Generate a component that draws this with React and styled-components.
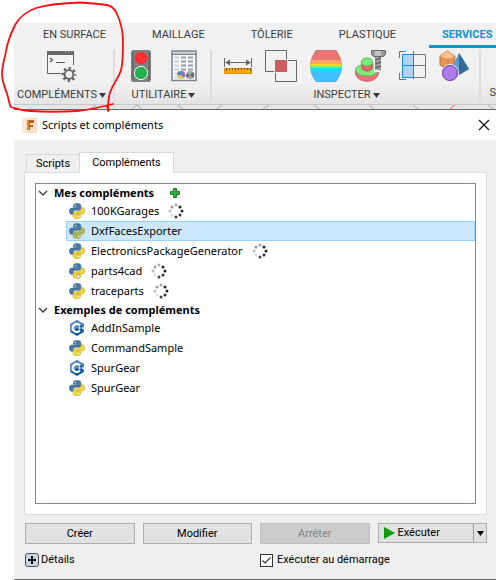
import React, { useState } from "react";
import styled, { createGlobalStyle, css } from "styled-components";

const GlobalStyle = createGlobalStyle`
  *, *::before, *::after { box-sizing: border-box; }
  body {
    margin: 0;
    background: #fff;
    font-family: "Noto Sans", "Open Sans", sans-serif;
    font-size: 11px;
    line-height: 16px;
    color: #000;
  }
  button { font: inherit; color: inherit; cursor: pointer; }
  svg { display: block; flex: none; }
`;

const widgetFont = css`
  font-family: Roboto, "Open Sans", sans-serif;
  font-size: 11px;
  line-height: 16px;
`;

const Screen = styled.main`
  position: relative;
  padding: 23px 0 0 14px;
  overflow: hidden;
`;

const Ribbon = styled.header`
  background: #f1f1f1;
  font-family: Roboto, sans-serif;
  font-size: 11px;
  color: #3c3c3c;
  overflow: hidden;
`;

const RibbonTabs = styled.nav`
  display: flex;
  gap: 20px;
  height: 25px;
  padding-left: 16px;
`;

const RibbonTab = styled.button`
  flex: none;
  height: 25px;
  padding: 1px 13px 0;
  border: 0;
  border-bottom: 3px solid ${(p) => (p.$active ? "#0696d7" : "transparent")};
  background: none;
  font-size: 11px;
  font-weight: ${(p) => (p.$active ? 700 : 400)};
  color: ${(p) => (p.$active ? "#0696d7" : "#3c3c3c")};
`;

const ToolGroups = styled.div`
  display: flex;
  height: 56px;
  padding-top: 2px;
  background: linear-gradient(#f1f1f1 60%, #e4e4e4);
`;

const ToolGroup = styled.section`
  display: flex;
  flex: none;
  flex-direction: column;
  align-items: center;
  gap: 5px;
  width: ${(p) => p.$width}px;
  height: 51px;
  padding-left: 2px;
  border-right: 2px solid #dcdcdc;
  &:first-child {
    padding: 0 4px 0 0;
  }
  &:last-child {
    flex: 1;
    align-items: flex-end;
    border-right: 0;
  }
`;

const ToolIcons = styled.div`
  display: flex;
  align-items: center;
  gap: ${(p) => p.$gap}px;
  height: 32px;
`;

const ToolButton = styled.button`
  padding: 0;
  border: 0;
  background: none;
`;

const GroupLabel = styled.button`
  display: flex;
  align-items: center;
  gap: 2px;
  padding: 0;
  border: 0;
  background: none;
  line-height: 16px;
  white-space: nowrap;
`;

const CanvasStrip = styled.div`
  height: 6px;
  border-top: 1px solid #c8c8c8;
  border-bottom: 1px solid #666;
  background: #e6e6e6;
  overflow: hidden;
`;

const Dialog = styled.section`
  background: #efefef;
  border-bottom: 1px solid #6a6668;
`;

const TitleBar = styled.div`
  display: flex;
  align-items: center;
  gap: 5px;
  height: 30px;
  padding: 0 6px 0 8px;
  background: #fff;
`;

const Title = styled.h1`
  flex: 1;
  margin: 0;
  font-size: 11px;
  font-weight: 400;
`;

const CloseButton = styled.button`
  padding: 0;
  border: 0;
  background: none;
`;

const DialogBody = styled.div`
  padding: 11px 9px 11px 10px;
`;

const TabList = styled.div`
  display: flex;
  align-items: flex-end;
  height: 21px;
  padding-left: 2px;
`;

const DialogTab = styled.button`
  position: relative;
  height: 18px;
  padding: 0 9px;
  border: 1px solid #d9d9d9;
  border-right-width: 0;
  border-bottom: 0;
  background: #f0f0f0;
  ${widgetFont}
  ${(p) =>
    p.$active &&
    css`
      height: 21px;
      margin-bottom: -1px;
      padding: 0 12px;
      border-right-width: 1px;
      background: #fff;
    `}
`;

const Panel = styled.div`
  padding: 10px;
  border: 1px solid #dcdcdc;
  background: #fff;
`;

const Tree = styled.div`
  height: 321px;
  border: 1px solid #828790;
  background: #fff;
`;

const BranchHeader = styled.div`
  display: flex;
  align-items: center;
  height: 17px;
  padding-left: 2px;
  font-weight: 700;
`;

const BranchToggle = styled.button`
  display: flex;
  align-items: center;
  gap: 6px;
  padding: 0;
  border: 0;
  background: none;
  line-height: 16px;
`;

const AddButton = styled.button`
  margin-left: 16px;
  padding: 0;
  border: 0;
  background: none;
`;

const Leaves = styled.ul`
  margin: 0;
  padding: 0 0 0 30px;
  list-style: none;
`;

const Leaf = styled.button`
  display: flex;
  align-items: center;
  width: 100%;
  height: 20px;
  padding: 0 2px;
  border: 1px solid ${(p) => (p.$selected ? "#99d1ff" : "transparent")};
  background: ${(p) => (p.$selected ? "#cce8ff" : "none")};
  gap: 6px;
  line-height: 16px;
  text-align: left;
`;

const LeafName = styled.span`
  margin-right: 3px;
`;

const Actions = styled.div`
  display: grid;
  grid-template-columns: repeat(4, 1fr);
  gap: 8px;
  margin: 8px 0 0 1px;
`;

const ActionButton = styled.button`
  height: 21px;
  padding: 0;
  border: 1px solid #adadad;
  background: #e1e1e1;
  ${widgetFont}
  &:disabled {
    border-color: #bfbfbf;
    background: #ccc;
    color: #838383;
  }
`;

const SplitButton = styled.div`
  display: flex;
  height: 20px;
  border: 1px solid #adadad;
  background: #e1e1e1;
`;

const RunButton = styled.button`
  display: flex;
  flex: 1;
  align-items: center;
  gap: 3px;
  padding: 0 0 0 4px;
  border: 0;
  background: none;
  ${widgetFont}
`;

const RunMenuButton = styled.button`
  display: grid;
  place-items: center;
  width: 13px;
  padding: 0;
  border: 0;
  border-left: 1px solid #a0a0a0;
  background: none;
`;

const Footer = styled.div`
  display: grid;
  grid-template-columns: repeat(4, 1fr);
  gap: 8px;
  align-items: center;
  margin: 8px 0 0 1px;
`;

const DetailsButton = styled.button`
  display: flex;
  align-items: center;
  grid-column: span 2;
  justify-self: start;
  gap: 2px;
  padding: 0;
  border: 0;
  background: none;
  ${widgetFont}
`;

const StartupLabel = styled.label`
  display: flex;
  grid-column: span 2;
  align-items: center;
  gap: 4px;
  ${widgetFont}
`;

const CheckBox = styled.input`
  appearance: none;
  width: 13px;
  height: 13px;
  margin: 0;
  border: 1px solid #333;
  background: #fff;
  &:checked {
    background: #fff
      url("data:image/svg+xml,%3Csvg xmlns='http://www.w3.org/2000/svg' viewBox='0 0 11 11'%3E%3Cpath d='M1.5 5.5 4 8 9.5 2.5' fill='none' stroke='%23333' stroke-width='1.2'/%3E%3C/svg%3E")
      center / 11px 11px no-repeat;
  }
`;

const Annotation = styled.svg`
  position: absolute;
  top: 0;
  left: 0;
  pointer-events: none;
`;

const ScriptIcon = () => (
  <svg width="30" height="32" viewBox="0 0 30 32" fill="none">
    <path d="M1 5h25v18H1z" fill="#f4f4f4" />
    <path d="M.5 4v19.500H14M26.500 4v11" stroke="#666" />
    <path d="M0 1h27v4H0z" fill="#666" />
    <path d="M18 2h7" stroke="#ccc" strokeDasharray="1 2" />
    <path d="m3 8 2.500 2L3 12M9 12.500h9" stroke="#555" strokeWidth="1.200" />
    <circle cx="22" cy="24.500" r="8" fill="#f1f1f1" />
    <circle cx="22" cy="24.500" r="6" stroke="#666" strokeWidth="3" strokeDasharray="2.300 2.412" strokeDashoffset="1.150" />
    <circle cx="22" cy="24.500" r="4.300" stroke="#666" strokeWidth="1.800" fill="#f1f1f1" />
  </svg>
);

const TrafficIcon = () => (
  <svg width="20" height="32" viewBox="0 0 20 32">
    <rect width="20" height="32" rx="2.500" fill="#808080" />
    <path d="M2 2v28M18 2v28" stroke="#6e6e6e" strokeWidth="2" />
    <circle cx="10" cy="8" r="6.200" fill="#ff2f32" />
    <circle cx="10" cy="23" r="6.600" fill="#22b14c" stroke="#fff" />
  </svg>
);

const TableIcon = () => (
  <svg width="26" height="32" viewBox="0 0 26 32">
    <path d="M1 1h24v29.500H1z" fill="#fbfbfb" stroke="#77818c" strokeWidth="1.500" />
    <path d="M2 2h22v2H2z" fill="#c4ccd4" />
    <path d="M1 4.500h24" stroke="#77818c" />
    <path d="M3 7.500h5M3 11.500h5M3 15.500h5M3 19.500h5" stroke="#c9cdd6" strokeWidth="2" />
    <path d="M3 23.500h3M3 27.500h3" stroke="#d5d8df" strokeWidth="2" />
    <path d="M10 7.500h12M10 11.500h12M10 15.500h12M10 19.500h12" stroke="#929aac" strokeWidth="2" strokeDasharray="5 2" />
    <circle cx="10" cy="25" r="4" fill="#e3c45c" />
    <path d="M10 25V21a4 4 0 0 1 3 7z" fill="#9271bc" />
    <path d="M10 25H6a4 4 0 0 1 4-4z" fill="#478bc2" />
    <circle cx="19" cy="25" r="4" fill="#a6a6a6" />
    <path d="m19 25 3-3a4 4 0 0 1 0 6zM19 25l-3 3a4 4 0 0 1-1-4z" fill="#6d6d6d" />
  </svg>
);

const RulerIcon = () => (
  <svg width="28" height="32" viewBox="0 0 28 32">
    <path d="M.5 8v9M27.500 8v9M4 12.500h20" stroke="#666" />
    <path d="m1 12.500 5-3v6zm26 0-5-3v6z" fill="#666" />
    <path d="M0 18h28v6H0z" fill="#fba604" />
    <path d="M.5 18.500h27v5H.5z" fill="none" stroke="#dd9000" />
    <path d="M2.500 18v3M5.500 18v2M8.500 18v2M11.500 18v3M14.500 18v2M17.500 18v2M20.500 18v2M23.500 18v2M26.500 18v3" stroke="#705326" />
  </svg>
);

const InterferenceIcon = () => (
  <svg width="32" height="32" viewBox="0 0 32 32" fill="none">
    <path d="M21.500 9V.5H.5v21H9M23 10.500h8.500v21h-21V23" stroke="#666" />
    <path d="M10 10h12v12H10z" fill="#cd5c5c" />
  </svg>
);

const BarrelIcon = () => (
  <svg width="32" height="32" viewBox="0 0 32 32">
    <defs>
      <clipPath id="barrel">
        <path d="M6 0h20q6 8 6 16t-6 16H6Q0 24 0 16T6 0z" />
      </clipPath>
    </defs>
    <g clipPath="url(#barrel)">
      <path d="M0 0h32v10H0z" fill="#e97575" />
      <path d="M0 10h32v4H0z" fill="#ffa566" />
      <path d="M0 14h32v2H0z" fill="#ffd91f" />
      <path d="M0 16h32v2H0z" fill="#7eea77" />
      <path d="M0 18h32v4H0z" fill="#1edce8" />
      <path d="M0 22h32v10H0z" fill="#40c0ff" />
      <path d="M6 0h20q6 8 6 16t-6 16H6Q0 24 0 16T6 0z" fill="none" stroke="#777" strokeOpacity=".25" strokeWidth="2" />
    </g>
  </svg>
);

const BoltIcon = () => (
  <svg width="31" height="32" viewBox="0 0 31 32">
    <path d="M.5 20c0-4 23-4 23 0v3c-1 11-22 11-23 0z" fill="#e97378" stroke="#cc5e65" />
    <ellipse cx="12" cy="20" rx="11.500" ry="6" fill="#7ceb7c" stroke="#63b563" />
    <path d="M7 12h10v7q-5 4-10 0z" fill="#df686c" stroke="#bd5256" />
    <ellipse cx="12" cy="12" rx="5.700" ry="4" fill="#7ceb7c" stroke="#63b563" />
    <path d="M19 5h8v17h-8z" fill="#f1f1f1" />
    <path d="M20 5h6v15h-6z" fill="#777" />
    <path d="m20 8 6-2M20 12l6-2M20 16l6-2M20 20l6-2" stroke="#bbb" />
    <path d="M16.500.5h14v4l-2 2h-10l-2-2z" fill="#999" stroke="#666" />
    <path d="M20 1h6v5h-6z" fill="#c2c2c2" />
  </svg>
);

const SectionIcon = () => (
  <svg width="27" height="32" viewBox="0 0 27 32" fill="none">
    <path d="M15 4.500h11.500v23H15M15 15.500h11" stroke="#777" />
    <path d="M3.500 4.500h11v23h-11z" fill="#b2d3ee" stroke="#168bde" />
    <path d="M4 15.500h11M14.500 1v28M7 1.500H.5V8M.5 23v6.500H7" stroke="#168bde" />
  </svg>
);

const ShapesIcon = () => (
  <svg width="30" height="32" viewBox="0 0 30 32">
    <path d="m8 1 8 5-1 9-7 4-7-4V6z" fill="#e89454" stroke="#b96c38" />
    <path d="m8 1 8 5-7 3-8-3z" fill="#ffc08d" />
    <path d="M9 9v9" stroke="#c77b48" />
    <path d="m20 3 10 16-10 6-8-6z" fill="#609aca" />
    <path d="m20 3 10 16-10 6z" fill="#31699a" />
    <circle cx="11" cy="23" r="8.500" fill="#a973e5" stroke="#f1f1f1" />
    <circle cx="11" cy="23" r="7.500" fill="#ae7be9" stroke="#754aa9" />
  </svg>
);

const Caret = () => (
  <svg width="7" height="5" viewBox="0 0 7 5">
    <path d="M0 0h7L3.500 5z" fill="currentColor" />
  </svg>
);

const PythonIcon = () => (
  <svg width="16" height="16" viewBox="0 0 16 16">
    <path d="M7.800.5C5.300.5 4.500 1.500 4.500 2.700v1.600h3.800v.8H2.800C1.200 5.100.4 6.200.4 8.200s.9 3.100 2.400 3.100h1.400V9.400c0-1.400 1-2.200 2.300-2.200h3.600c1 0 1.800-.8 1.800-1.800V2.700c0-1.400-1.500-2.200-4.100-2.200z" fill="#4679a8" stroke="#396489" strokeWidth=".6" />
    <path d="M8.200 15.500c2.500 0 3.400-1 3.400-2.200v-1.600H7.800v-.8h5.400c1.600 0 2.400-1.100 2.400-3.100s-.9-3.100-2.400-3.100h-1.300v1.900c0 1.400-1 2.200-2.300 2.200H6c-1 0-1.800.8-1.800 1.800v2.700c0 1.400 1.500 2.200 4 2.200z" fill="currentColor" stroke="#b6982f" strokeWidth=".6" />
    <circle cx="6.400" cy="2.600" r=".7" fill="#fff" />
    <circle cx="9.700" cy="13.400" r=".7" fill="#fff" />
  </svg>
);

const PythonTint = styled.span`
  color: ${(p) => (p.$selected ? "#9fba58" : "#f6d835")};
`;

const CppIcon = () => (
  <svg width="16" height="16" viewBox="0 0 16 16" fill="none">
    <path d="m8 0 6.800 4v8L8 16l-6.800-4V4z" fill="#0f589c" />
    <path d="m8 0 6.800 4L1.200 12V4z" fill="#608fbd" />
    <path d="M10.800 5.500a4 4 0 1 0 0 5" stroke="#fff" strokeWidth="2.200" />
    <path d="M9 8h3M10.500 6.500v3M12.500 8h3M14 6.500v3" stroke="#fff" strokeWidth=".9" />
  </svg>
);

const dots = [
  [8, 2, "#aaa"], [12, 4, "#222"], [14, 8, "#222"], [12, 12, "#333"],
  [8, 14, "#444"], [4, 12, "#ddd"], [2, 8, "#bbb"], [4, 4, "#999"],
];

const Spinner = () => (
  <svg width="16" height="16" viewBox="0 0 16 16" role="img" aria-label="Chargement">
    {dots.map(([x, y, fill]) => (
      <circle key={`${x}-${y}`} cx={x} cy={y} r="1.500" fill={fill} />
    ))}
  </svg>
);

const Chevron = () => (
  <svg width="10" height="8" viewBox="0 0 10 8" fill="none">
    <path d="m1 2 4 4 4-4" stroke="#444" strokeWidth="1.500" />
  </svg>
);

const PlusIcon = () => (
  <svg width="10" height="10" viewBox="0 0 10 10">
    <path d="M3.500.5h3v3h3v3h-3v3h-3v-3h-3v-3h3z" fill="#3aa63f" stroke="#15831d" />
  </svg>
);

const FusionIcon = () => (
  <svg width="15" height="15" viewBox="0 0 15 15">
    <path d="M0 0h15v15H0z" fill="#f9dcc3" />
    <path d="M0 0h4v15H0z" fill="#fbe9da" />
    <path d="M5 2h7v3H8v2h3v2H8v3H5z" fill="#b3641f" />
    <path d="M5 2h2v10H5z" fill="#e58c37" />
    <path d="M8 12.500h5" stroke="#fff" />
  </svg>
);

const CloseIcon = () => (
  <svg width="12" height="12" viewBox="0 0 12 12">
    <path d="m1 1 10 10M11 1 1 11" stroke="#111" strokeWidth="1.200" />
  </svg>
);

const DetailsIcon = () => (
  <svg width="14" height="14" viewBox="0 0 14 14">
    <rect x=".5" y=".5" width="13" height="13" rx="2" fill="#c8d2df" stroke="#4b5060" />
    <path d="M3 7h8M7 3v8" stroke="#111" strokeWidth="2" />
  </svg>
);

const PlayIcon = () => (
  <svg width="12" height="12" viewBox="0 0 12 12">
    <path d="M1 0v12l11-6z" fill="#0a9c0a" />
  </svg>
);

const ribbonTabs = ["EN SURFACE", "MAILLAGE", "TÔLERIE", "PLASTIQUE", "SERVICES"];

const toolGroups = [
  { label: "COMPLÉMENTS", menu: true, width: 101, gap: 0, tools: [["Scripts et compléments", ScriptIcon]] },
  { label: "UTILITAIRE", menu: true, width: 97, gap: 20, tools: [["Vérifier", TrafficIcon], ["Tableau", TableIcon]] },
  {
    label: "INSPECTER",
    menu: true,
    width: 269,
    gap: 13,
    tools: [
      ["Mesurer", RulerIcon],
      ["Interférence", InterferenceIcon],
      ["Courbure", BarrelIcon],
      ["Accessibilité", BoltIcon],
      ["Section", SectionIcon],
      ["Composants", ShapesIcon],
    ],
  },
  { label: "S", width: 15, gap: 0, tools: [] },
];

const branches = [
  {
    name: "Mes compléments",
    canAdd: true,
    items: [
      { name: "100KGarages", loading: true },
      { name: "DxfFacesExporter" },
      { name: "ElectronicsPackageGenerator", loading: true },
      { name: "parts4cad", loading: true },
      { name: "traceparts", loading: true },
    ],
  },
  {
    name: "Exemples de compléments",
    items: [
      { name: "AddInSample", cpp: true },
      { name: "CommandSample" },
      { name: "SpurGear", cpp: true },
      { name: "SpurGear" },
    ],
  },
];

export default function App() {
  const [selected, setSelected] = useState("0-1");
  const [closed, setClosed] = useState({});
  return (
    <>
      <GlobalStyle />
      <Screen>
        <Ribbon>
          <RibbonTabs>
            {ribbonTabs.map((tab) => (
              <RibbonTab key={tab} $active={tab === "SERVICES"}>{tab}</RibbonTab>
            ))}
          </RibbonTabs>
          <ToolGroups>
            {toolGroups.map((group) => (
              <ToolGroup key={group.label} $width={group.width}>
                <ToolIcons $gap={group.gap}>
                  {group.tools.map(([name, Icon]) => (
                    <ToolButton key={name} aria-label={name}><Icon /></ToolButton>
                  ))}
                </ToolIcons>
                <GroupLabel>{group.label}{group.menu && <Caret />}</GroupLabel>
              </ToolGroup>
            ))}
          </ToolGroups>
          <CanvasStrip>
            <svg width="482" height="4" viewBox="0 0 482 4" fill="none">
              <path d="m76 4 6-4M118 4l5-4 5 4M163 0l6 4M203 4l5-4M249 4l6-4M300 0l5 4M355 0l5 4M399 0l5 4M474 0l5 4" stroke="#aaa" />
              <path d="m436 4 5-4" stroke="#e55" />
            </svg>
          </CanvasStrip>
        </Ribbon>

        <Dialog role="dialog" aria-labelledby="dialog-title">
          <TitleBar>
            <FusionIcon />
            <Title id="dialog-title">Scripts et compléments</Title>
            <CloseButton aria-label="Fermer"><CloseIcon /></CloseButton>
          </TitleBar>
          <DialogBody>
            <TabList role="tablist">
              <DialogTab role="tab" aria-selected="false">Scripts</DialogTab>
              <DialogTab role="tab" aria-selected="true" $active>Compléments</DialogTab>
            </TabList>
            <Panel role="tabpanel">
              <Tree>
                {branches.map((branch, b) => (
                  <div key={branch.name}>
                    <BranchHeader>
                      <BranchToggle
                        aria-expanded={!closed[b]}
                        onClick={() => setClosed({ ...closed, [b]: !closed[b] })}
                      >
                        <Chevron />
                        {branch.name}
                      </BranchToggle>
                      {branch.canAdd && <AddButton aria-label="Ajouter"><PlusIcon /></AddButton>}
                    </BranchHeader>
                    {!closed[b] && (
                      <Leaves>
                        {branch.items.map((item, i) => {
                          const id = `${b}-${i}`;
                          return (
                            <li key={id}>
                              <Leaf $selected={selected === id} onClick={() => setSelected(id)}>
                                {item.cpp ? (
                                  <CppIcon />
                                ) : (
                                  <PythonTint $selected={selected === id}><PythonIcon /></PythonTint>
                                )}
                                <LeafName>{item.name}</LeafName>
                                {item.loading && <Spinner />}
                              </Leaf>
                            </li>
                          );
                        })}
                      </Leaves>
                    )}
                  </div>
                ))}
              </Tree>
            </Panel>
            <Actions>
              <ActionButton>Créer</ActionButton>
              <ActionButton>Modifier</ActionButton>
              <ActionButton disabled>Arrêter</ActionButton>
              <SplitButton>
                <RunButton><PlayIcon />Exécuter</RunButton>
                <RunMenuButton aria-label="Options d'exécution"><Caret /></RunMenuButton>
              </SplitButton>
            </Actions>
            <Footer>
              <DetailsButton><DetailsIcon />Détails</DetailsButton>
              <StartupLabel>
                <CheckBox type="checkbox" defaultChecked />
                Exécuter au démarrage
              </StartupLabel>
            </Footer>
          </DialogBody>
        </Dialog>

        <Annotation width="130" height="120" viewBox="0 0 130 120" fill="none" aria-hidden="true">
          <path
            d="M15 25C20 16 28 11 36 8 50 4 62 3 80 2.500 92 3 100 4 107 5c5 1 8 4 10 9 4 9 6 17 6 27 0 12 0 22-2 29-3 10-11 17-12 27-1 5-1 9-1 14M15 25C12 31 9 38 7 46 6 55 2 64 2 74c0 8 4 16 6 23 1 4 1 7 3 10 7 2 12 4 20 4 14 1 30 1 46 0 12-1 24-4 36-7M107 107l2 3"
            stroke="#fb0d0d" strokeWidth="1.800" strokeLinecap="round" strokeLinejoin="round"
          />
        </Annotation>
      </Screen>
    </>
  );
}
